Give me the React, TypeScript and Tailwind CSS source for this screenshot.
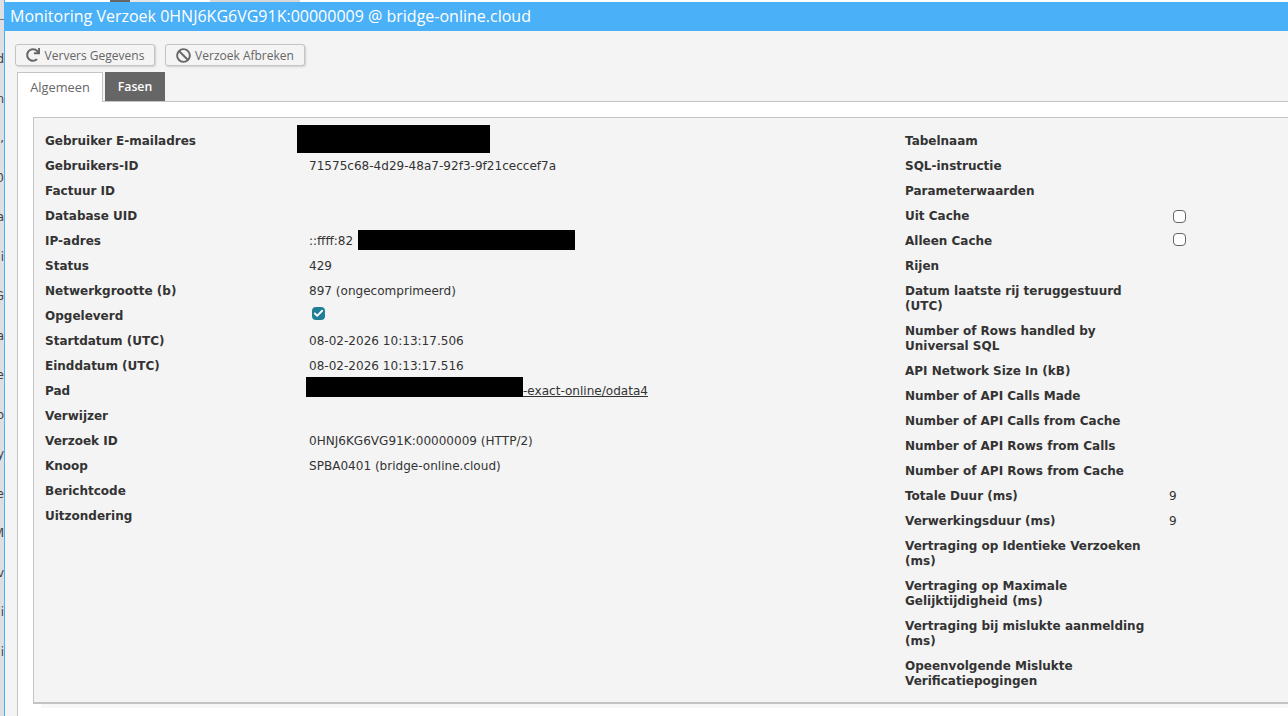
import { Check } from 'lucide-react';
import { FaBan, FaRedo } from 'react-icons/fa';

const leftRows: { label: string; value?: string; check?: boolean; redact?: string; link?: boolean }[] = [
  { label: 'Gebruiker E-mailadres', redact: 'email' },
  { label: 'Gebruikers-ID', value: '71575c68-4d29-48a7-92f3-9f21ceccef7a' },
  { label: 'Factuur ID' },
  { label: 'Database UID' },
  { label: 'IP-adres', redact: 'ip' },
  { label: 'Status', value: '429' },
  { label: 'Netwerkgrootte (b)', value: '897 (ongecomprimeerd)' },
  { label: 'Opgeleverd', check: true },
  { label: 'Startdatum (UTC)', value: '08-02-2026 10:13:17.506' },
  { label: 'Einddatum (UTC)', value: '08-02-2026 10:13:17.516' },
  { label: 'Pad', link: true },
  { label: 'Verwijzer' },
  { label: 'Verzoek ID', value: '0HNJ6KG6VG91K:00000009 (HTTP/2)' },
  { label: 'Knoop', value: 'SPBA0401 (bridge-online.cloud)' },
  { label: 'Berichtcode' },
  { label: 'Uitzondering' },
];

const rightRows: { label: string; value?: string; box?: string }[] = [
  { label: 'Tabelnaam' },
  { label: 'SQL-instructie' },
  { label: 'Parameterwaarden' },
  { label: 'Uit Cache', box: 'mt-px' },
  { label: 'Alleen Cache', box: '-mt-px' },
  { label: 'Rijen' },
  { label: 'Datum laatste rij teruggestuurd (UTC)' },
  { label: 'Number of Rows handled by Universal SQL' },
  { label: 'API Network Size In (kB)' },
  { label: 'Number of API Calls Made' },
  { label: 'Number of API Calls from Cache' },
  { label: 'Number of API Rows from Calls' },
  { label: 'Number of API Rows from Cache' },
  { label: 'Totale Duur (ms)', value: '9' },
  { label: 'Verwerkingsduur (ms)', value: '9' },
  { label: 'Vertraging op Identieke Verzoeken (ms)' },
  { label: 'Vertraging op Maximale Gelijktijdigheid (ms)' },
  { label: 'Vertraging bij mislukte aanmelding (ms)' },
  { label: 'Opeenvolgende Mislukte Verificatiepogingen' },
];

// afgesneden tekst van de pagina achter het venster
const behindRows = ['d', 'n', '0,', '0', 'a', 'i', 'G', 'a', 'e', 'o', 'y', 'e', 'M', 'iv', 'li', 'i'];

function LeftValue({ row }: { row: (typeof leftRows)[number] }) {
  if (row.redact === 'email') return <div className="-ml-3 -mt-[9px] h-7 w-[193px] bg-black" />;
  if (row.redact === 'ip') {
    return (
      <div className="flex items-start">
        <span>::ffff:82</span>
        <div className="ml-[5px] -mt-1 h-5 w-[217px] shrink-0 bg-black" />
      </div>
    );
  }
  if (row.link) {
    return (
      <div className="-ml-[3px] flex items-start">
        <div className="-mt-[7px] h-5 w-[217px] shrink-0 bg-black" />
        <span className="underline">-exact-online/odata4</span>
      </div>
    );
  }
  if (row.check) {
    return (
      <div className="ml-[3px] -mt-0.5 flex h-[13px] w-[13px] items-center justify-center rounded-sm bg-[#1f7f97]">
        <Check className="h-[11px] w-[11px] text-white" strokeWidth={4} />
      </div>
    );
  }
  return <span>{row.value}</span>;
}

export default function App() {
  return (
    <div className="flex h-[716px] w-[1288px] overflow-hidden bg-white font-['DejaVu_Sans',sans-serif] text-[12px] leading-[15px] text-[#333]">
      <div className="flex w-1 shrink-0 flex-col overflow-hidden bg-[#dcdfe4] pt-[19px] text-[#444]">
        <div className="mb-8 h-px shrink-0 bg-[#777]" />
        {behindRows.map((text, i) => (
          <div key={i} className="flex h-[39.5px] shrink-0 justify-end">
            {text}
          </div>
        ))}
      </div>
      <div className="flex min-w-0 flex-1 flex-col border-l border-[#4ab0f7]">
        <div className="flex h-0.5 shrink-0 pl-[105px]">
          <div className="h-0.5 w-5 bg-[#666]" />
          <div className="h-0.5 w-[30px] bg-[#e6e6e6]" />
          <div className="ml-[50px] h-0.5 w-[90px] bg-[#d8d8d8]" />
        </div>
        <div className="flex h-[29px] shrink-0 items-center bg-[#4ab0f7] pl-[5px] font-['Open_Sans',sans-serif] text-[16px] text-white">
          Monitoring Verzoek 0HNJ6KG6VG91K:00000009 @ bridge-online.cloud
        </div>
        <div className="flex flex-1 flex-col bg-[#f4f4f4] pl-[10px]">
          <div className="flex gap-[10px] pt-[13px] font-['Open_Sans',sans-serif] text-[12px] text-[#666]">
            <button className="flex h-[22px] w-[140px] items-center justify-center gap-[5px] rounded-[3px] border border-[#c4c4c4] bg-[#f4f4f4] shadow-[1px_1px_2px_rgba(0,0,0,0.15)]">
              <FaRedo size={14} />
              Ververs Gegevens
            </button>
            <button className="flex h-[22px] w-[140px] items-center justify-center gap-1 rounded-[3px] border border-[#c4c4c4] bg-[#f4f4f4] shadow-[1px_1px_2px_rgba(0,0,0,0.15)]">
              <FaBan size={15} />
              Verzoek Afbreken
            </button>
          </div>
          <div className="relative z-10 mt-1.5 flex gap-[2px] pl-[2px] font-['Open_Sans',sans-serif]">
            <div className="flex h-[30px] w-[86px] items-center justify-center border border-b-0 border-[#c4c4c4] bg-white text-[12.8px] text-[#666]">
              Algemeen
            </div>
            <div className="flex h-[29px] w-[60px] items-center justify-center bg-[#666] text-[12.3px] font-semibold text-white">
              Fasen
            </div>
          </div>
          <div className="ml-[2px] -mt-px flex-1 border-l border-t border-[#c4c4c4] bg-white pl-[15px] pt-[15px]">
            <div className="flex h-[587px] border-b-2 border-l border-t border-[#c4c4c4] bg-[#f4f4f4] pl-[11px] pt-[11px] shadow-[8px_4px_0_rgba(0,0,0,0.03)]">
              <div className="w-[860px] shrink-0">
                {leftRows.map((row) => (
                  <div key={row.label} className="flex h-[25px] py-[5px]">
                    <div className="w-[264px] shrink-0 font-bold">{row.label}</div>
                    <div className="min-w-0 flex-1 text-[12.05px]">
                      <LeftValue row={row} />
                    </div>
                  </div>
                ))}
              </div>
              <div className="flex-1">
                {rightRows.map((row) => (
                  <div key={row.label} className="flex min-h-[25px] py-[5px]">
                    <div className="w-[252px] shrink-0 font-bold">{row.label}</div>
                    {row.value && <div className="pl-[12px]">{row.value}</div>}
                    {row.box && (
                      <div className={`ml-[16px] h-[13px] w-[13px] rounded-sm border border-[#666] bg-white ${row.box}`} />
                    )}
                  </div>
                ))}
              </div>
            </div>
          </div>
        </div>
      </div>
    </div>
  );
}
